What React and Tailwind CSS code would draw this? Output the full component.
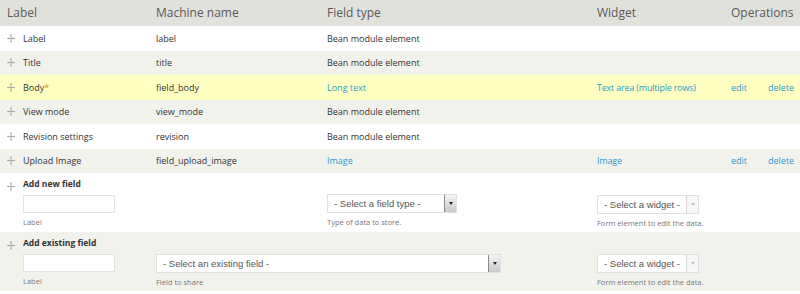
import React from "react";

const rows = [
  { label: "Label", machine: "label", type: "Bean module element", bg: "bg-white" },
  { label: "Title", machine: "title", type: "Bean module element", bg: "bg-[#f2f2ed]" },
  { label: "Body", req: true, machine: "field_body", type: "Long text", widget: "Text area (multiple rows)", ops: true, bg: "bg-[#ffffc2]" },
  { label: "View mode", machine: "view_mode", type: "Bean module element", bg: "bg-[#f2f2ed]" },
  { label: "Revision settings", machine: "revision", type: "Bean module element", bg: "bg-white" },
  { label: "Upload Image", machine: "field_upload_image", type: "Image", widget: "Image", ops: true, bg: "bg-[#f2f2ed]" },
];

// little four-way arrow, drupal tabledrag style
const DragHandle = () => (
  <svg width="8" height="9" viewBox="0 0 8 9" className="text-[#a8a8a8]">
    <path d="M4 1v7M0.5 4.5h7" stroke="currentColor" strokeWidth="1" />
    <path d="M4 0L2.8 1.4h2.4zM4 9L2.8 7.6h2.4zM0 4.5L1.4 3.3v2.4zM8 4.5L6.6 3.3v2.4z" fill="currentColor" />
  </svg>
);

const Select = ({ text, width, disabled }) => (
  <div className={`flex h-[19px] border border-[#e0e0e0] bg-white ${width}`}>
    <div className="flex-1 pl-[6px] text-[9.5px] leading-[17px] text-[#555] font-['Liberation_Sans',sans-serif]">{text}</div>
    <div
      className={`flex w-[12px] items-center justify-center border-l ${
        disabled ? "border-[#d6d6d6] bg-[#f7f7f7]" : "border-[#888] bg-gradient-to-b from-[#f4f4f4] to-[#c9c9c9]"
      }`}
    >
      <div
        className={`h-0 w-0 border-x-[2.5px] border-t-[3px] border-x-transparent ${
          disabled ? "border-t-[#c0c0c0]" : "border-t-[#222]"
        }`}
      />
    </div>
  </div>
);

const Help = ({ children }) => <div className="mt-[4px] text-[7.5px] text-[#777]">{children}</div>;

export default function App() {
  return (
    <div className="w-[800px] h-[294px] bg-white font-['Open_Sans',sans-serif] text-[#333] overflow-hidden">
      <div className="flex h-[26px] items-center bg-[#e1e1dc] text-[12px] text-[#5a5a5a]">
        <div className="w-[156px] pl-[7px]">Label</div>
        <div className="w-[171px]">Machine name</div>
        <div className="w-[270px]">Field type</div>
        <div className="w-[134px]">Widget</div>
        <div>Operations</div>
      </div>
      {rows.map((r) => (
        <div key={r.machine} className={`flex h-[24.5px] items-center text-[9px] ${r.bg}`}>
          <div className="flex w-[23px] justify-center pr-[2px]">
            <DragHandle />
          </div>
          <div className="w-[133px]">
            {r.label}
            {r.req && <span className="text-[#e09010]">*</span>}
          </div>
          <div className="w-[171px]">{r.machine}</div>
          <div className={`w-[270px] ${r.ops ? "text-[#2a9bd0]" : ""}`}>{r.type}</div>
          <div className="w-[134px] text-[#2a9bd0] tracking-[-0.2px]">{r.widget}</div>
          {r.ops && (
            <>
              <div className="w-[37px] text-[#2a9bd0]">edit</div>
              <div className="text-[#2a9bd0]">delete</div>
            </>
          )}
        </div>
      ))}
      <div className="flex h-[59px] bg-white text-[9px]">
        <div className="flex w-[23px] justify-center pt-[9px] pr-[2px]">
          <DragHandle />
        </div>
        <div className="w-[304px] pt-[5px]">
          <div className="font-bold text-[8.5px]">Add new field</div>
          <div className="mt-[4px] h-[18px] w-[92px] border border-[#e2e2e2] bg-white" />
          <Help>Label</Help>
        </div>
        <div className="w-[270px] pt-[21px]">
          <Select text="- Select a field type -" width="w-[130px]" />
          <Help>Type of data to store.</Help>
        </div>
        <div className="pt-[22px]">
          <Select text="- Select a widget -" width="w-[102px]" disabled />
          <Help>Form element to edit the data.</Help>
        </div>
      </div>
      <div className="flex h-[59px] bg-[#f2f2ed] text-[9px]">
        <div className="flex w-[23px] justify-center pt-[9px] pr-[2px]">
          <DragHandle />
        </div>
        <div className="w-[133px] pt-[5px]">
          <div className="font-bold text-[8.5px]">Add existing field</div>
          <div className="mt-[4px] h-[18px] w-[92px] border border-[#e2e2e2] bg-white" />
          <Help>Label</Help>
        </div>
        <div className="w-[441px] pt-[22px]">
          <Select text="- Select an existing field -" width="w-[345px]" />
          <Help>Field to share</Help>
        </div>
        <div className="pt-[22px]">
          <Select text="- Select a widget -" width="w-[102px]" disabled />
          <Help>Form element to edit the data.</Help>
        </div>
      </div>
    </div>
  );
}
